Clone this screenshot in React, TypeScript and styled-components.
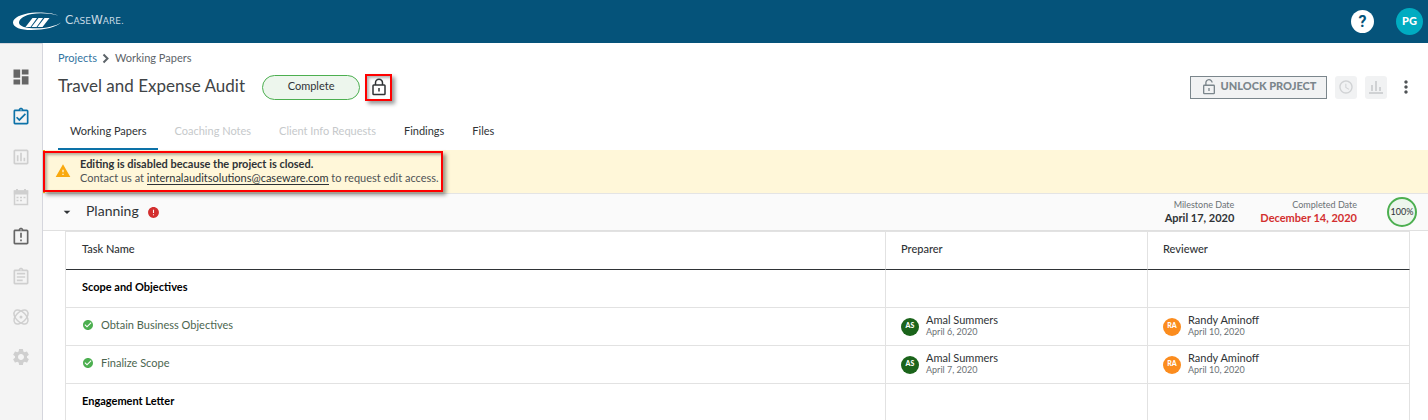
import React from 'react';
import styled, { createGlobalStyle } from 'styled-components';
import {
  MdDashboard,
  MdOutlineAssignmentTurnedIn,
  MdOutlineAssessment,
  MdOutlineAssignmentLate,
  MdOutlineAssignment,
  MdSettings,
  MdWarning,
  MdError,
  MdCheckCircle,
  MdMoreVert,
  MdAccessTime,
  MdArrowDropDown,
} from 'react-icons/md';

const GlobalStyle = createGlobalStyle`
  *, *::before, *::after { box-sizing: border-box; }
  body { margin: 0; background: #fff; color: #2f3336; font: 11px/16px Lato, "Open Sans", sans-serif; }
  button { font: inherit; margin: 0; padding: 0; border: 0; background: none; color: inherit; }
  a { color: inherit; text-decoration: none; }
  svg { display: block; flex: none; }
`;

const Page = styled.div`
  display: flex;
  flex-direction: column;
  min-height: 100vh;
  overflow: hidden;
`;

const TopBar = styled.header`
  display: flex;
  align-items: center;
  height: 43px;
  padding: 0 5px 0 12px;
  background: #05537a;
  color: #fff;
`;

const Brand = styled.a`
  display: flex;
  align-items: center;
  gap: 3px;
  margin-right: auto;
`;

const BrandName = styled.span`
  padding-bottom: 2px;
  font: 9px/12px "DejaVu Sans", sans-serif;
  color: #c9dbe5;
`;

const BrandCap = styled.span`
  font-size: 12px;
`;

const HelpButton = styled.button`
  display: grid;
  place-items: center;
  width: 23px;
  height: 23px;
  margin-right: 22px;
  border-radius: 50%;
  background: #fff;
  color: #05537a;
  font: 700 16px/20px Roboto, sans-serif;
`;

const Avatar = styled.span<{ $size: number; $color: string; $font: number }>`
  display: grid;
  place-items: center;
  flex: none;
  width: ${(p) => p.$size}px;
  height: ${(p) => p.$size}px;
  padding-bottom: 2px;
  border-radius: 50%;
  background: ${(p) => p.$color};
  color: #fff;
  font-weight: 900;
  font-size: ${(p) => p.$font}px;
  line-height: 1;
`;

const Body = styled.div`
  display: flex;
  flex: 1;
`;

const Sidebar = styled.nav`
  display: flex;
  flex-direction: column;
  align-items: center;
  gap: 20px;
  flex: none;
  width: 43px;
  padding-top: 23px;
  border-right: 1px solid #d5d6dd;
  border-top: 1px solid #d5d6dd;
  background: #f4f4f4;
`;

const SideItem = styled.button<{ $color: string }>`
  display: grid;
  place-items: center;
  width: 20px;
  height: 20px;
  color: ${(p) => p.$color};
`;

const Main = styled.main`
  flex: 1;
  min-width: 0;
`;

const Crumbs = styled.nav`
  display: flex;
  align-items: center;
  gap: 1px;
  padding: 7px 15px 0;
  color: #5d6469;
`;

const CrumbLink = styled.a`
  color: #3274a1;
`;

const TitleRow = styled.div`
  display: flex;
  align-items: center;
  height: 42px;
  padding: 0 11px 0 15px;
`;

const Title = styled.h1`
  margin: 0 17px 0 0;
  padding-bottom: 2px;
  font-size: 17px;
  line-height: 24px;
  font-weight: 400;
  color: #3f4447;
`;

const StatusPill = styled.span`
  display: grid;
  place-items: center;
  width: 98px;
  height: 25px;
  margin-right: 5px;
  padding-bottom: 2px;
  border: 1px solid #4caf50;
  border-radius: 13px;
  background: #edf6ed;
`;

const LockMark = styled.span`
  display: grid;
  place-items: center;
  width: 27px;
  height: 27px;
  border: 2px solid #f00;
  box-shadow: 3px 3px 4px rgba(0, 0, 0, 0.4), inset 2px 2px 3px rgba(0, 0, 0, 0.3);
`;

const Actions = styled.div`
  display: flex;
  align-items: center;
  gap: 8px;
  margin-left: auto;
`;

const UnlockButton = styled.button`
  display: flex;
  align-items: center;
  justify-content: center;
  gap: 4px;
  width: 137px;
  height: 23px;
  border: 1px solid #7b868c;
  background: #f1f2f3;
  color: #7b868c;
  font-weight: 900;
`;

const UnlockLabel = styled.span`
  padding-bottom: 2px;
`;

const IconButton = styled.button<{ $plain?: boolean }>`
  display: grid;
  place-items: center;
  width: 22px;
  height: 23px;
  border-radius: 3px;
  background: ${(p) => (p.$plain ? 'none' : '#f1f2f3')};
  color: ${(p) => (p.$plain ? '#4f5356' : '#d0d2d4')};
`;

const Tabs = styled.div`
  display: flex;
  gap: 5px;
  height: 42px;
  padding: 0 15px;
`;

const Tab = styled.button<{ $active?: boolean }>`
  padding: 6px 11px 0 12px;
  border-bottom: 2px solid ${(p) => (p.$active ? '#0d72a8' : 'transparent')};
  color: #2f3336;

  &:disabled { color: #c6c9cb; }
`;

const Banner = styled.div`
  display: flex;
  padding: 1px 0;
  border-bottom: 1px solid #e4e4e4;
  background: #fff7d9;
  box-shadow: inset 2px 0 #f9a90f;
`;

const BannerMessage = styled.div`
  display: flex;
  align-items: center;
  gap: 9px;
  padding: 4px 2px 5px 10px;
  border: 2px solid #f00;
  box-shadow: 3px 3px 4px rgba(0, 0, 0, 0.4), inset 2px 2px 3px rgba(0, 0, 0, 0.3);
  background: #fff7d9;
`;

const BannerText = styled.p`
  margin: 0;
  line-height: 14px;
  color: #4f5356;
`;

const BannerStrong = styled.strong`
  display: block;
  color: #2f3336;
`;

const MailLink = styled.a`
  border-bottom: 1px solid #2f3336;
  color: #2f3336;
`;

const SectionHeader = styled.div`
  display: flex;
  align-items: center;
  height: 37px;
  padding: 0 11px 0 16px;
  border-bottom: 1px solid #e0e0e0;
  background: #fafafa;
`;

const SectionTitle = styled.h2`
  margin: 0 8px 0 11px;
  padding-bottom: 2px;
  font-size: 14px;
  line-height: 18px;
  font-weight: 400;
`;

const SectionMeta = styled.div`
  display: flex;
  align-items: center;
  gap: 26px;
  margin-left: auto;
`;

const DateBlock = styled.dl<{ $late?: boolean }>`
  margin: 0;
  padding-bottom: 1px;
  text-align: right;
  color: ${(p) => (p.$late ? '#d32f2f' : '#2f3336')};
`;

const DateLabel = styled.dt`
  font-size: 9px;
  line-height: 12px;
  color: #6b7175;
`;

const DateValue = styled.dd`
  margin: 0;
  line-height: 14px;
  font-weight: 700;
`;

const Progress = styled.span`
  display: grid;
  place-items: center;
  width: 30px;
  height: 30px;
  margin-left: 4px;
  border: 2px solid #4caf50;
  border-radius: 50%;
  background: #edf6ed;
  font-size: 9px;
  line-height: 12px;
`;

const TableWrap = styled.div`
  padding: 0 18px 0 22px;
`;

const TaskTable = styled.table`
  width: 100%;
  border-collapse: separate;
  border-spacing: 0;
  border-left: 1px solid #e2e2e2;
  border-top: 1px solid #e2e2e2;
  table-layout: fixed;
`;

const PersonCol = styled.col`
  width: 262px;
`;

const HeadCell = styled.th`
  height: 38px;
  padding: 0 14px 3px 15px;
  border-right: 1px solid #e2e2e2;
  border-bottom: 1px solid #2f3336;
  text-align: left;
  font-weight: 500;

  &:first-child { padding-left: 16px; }
`;

const Cell = styled.td`
  height: 38px;
  padding: 0 14px 0 15px;
  border-right: 1px solid #e2e2e2;
  border-bottom: 1px solid #e2e2e2;

  &:first-child { padding: 0 14px 3px 16px; }
`;

const GroupName = styled.strong`
  color: #000;
`;

const TaskLink = styled.a`
  display: flex;
  align-items: center;
  gap: 7px;
  color: #4c6650;
`;

const Person = styled.div`
  display: flex;
  align-items: center;
  gap: 7px;
`;

const PersonText = styled.div`
  padding-bottom: 2px;
`;

const PersonName = styled.div`
  line-height: 12px;
`;

const PersonDate = styled.div`
  font-size: 9px;
  line-height: 11px;
  color: #6b7175;
`;

const Logo = () => (
  <svg width="50" height="20" viewBox="0 0 50 20" fill="#fff" aria-hidden="true">
    <path d="M46 3.500C40 .5 28 0 20 .8 9 2 1 6 1 10.500 1 15.500 9 18 19 18c14 0 26-3 30-7.500C44 14 34 16.300 24 16.300 14 16.300 7 14.500 7 10.500 7 6.500 13 3.300 20 1.900 28 .6 38 1.200 46 3.500Z" />
    <path d="M20.500 6H25L18.500 15H13.500ZM26.500 6H31L24.500 15H19.500ZM32.500 6H37.500L30.500 15H25.500Z" />
  </svg>
);

const LockIcon = ({ open, size }: { open?: boolean; size: number }) => (
  <svg width={size} height={size} viewBox="0 0 18 18" fill="none" stroke="currentColor" strokeWidth="1.500" aria-hidden="true">
    <rect x="3" y="7" width="12" height="9.500" rx="0.800" />
    <path d={open ? 'M5.500 7V4.500a3.500 3.500 0 0 1 7-.5' : 'M5.500 7V4.800a3.500 3.500 0 0 1 7 0V7'} />
    <path d="M9 10v3.500" />
  </svg>
);

const CrumbChevron = () => (
  <svg width="16" height="16" viewBox="0 0 16 16" fill="none" stroke="currentColor" strokeWidth="2" aria-hidden="true">
    <path d="M5.500 4.500 9.500 8.500 5.500 12.500" />
  </svg>
);

const CalendarIcon = () => (
  <svg width="20" height="20" viewBox="0 0 20 20" fill="none" stroke="currentColor" aria-hidden="true">
    <path d="M3.500 4h13v13.500h-13Z" strokeWidth="1.500" />
    <path d="M2.800 5.500h14.400" strokeWidth="4" />
    <path d="M6 2v3M14 2v3" strokeWidth="2" />
    <path d="M5.500 10.500h2M9 10.500h2M12.500 10.500h2M5.500 13.500h2M9 13.500h2" strokeWidth="1.500" />
  </svg>
);

const AtomIcon = () => (
  <svg width="20" height="20" viewBox="0 0 20 20" fill="none" stroke="currentColor" strokeWidth="1.500" aria-hidden="true">
    <ellipse cx="10" cy="10" rx="8.600" ry="5" transform="rotate(45 10 10)" />
    <ellipse cx="10" cy="10" rx="8.600" ry="5" transform="rotate(-45 10 10)" />
    <circle cx="10" cy="10" r="1.500" fill="currentColor" stroke="none" />
  </svg>
);

const ChartIcon = () => (
  <svg width="16" height="16" viewBox="0 0 16 16" fill="currentColor" aria-hidden="true">
    <path d="M1 13h14v2H1ZM3 6h2v6H3ZM7 2h2v10H7ZM11 8h2v4h-2Z" />
  </svg>
);

const GREY = '#cfcfcf';

const sideItems = [
  { label: 'Dashboard', color: '#666', icon: <MdDashboard size={20} /> },
  { label: 'Projects', color: '#0d72a8', icon: <MdOutlineAssignmentTurnedIn size={20} /> },
  { label: 'Reports', color: GREY, icon: <MdOutlineAssessment size={20} /> },
  { label: 'Calendar', color: GREY, icon: <CalendarIcon /> },
  { label: 'Issues', color: '#666', icon: <MdOutlineAssignmentLate size={20} /> },
  { label: 'Forms', color: GREY, icon: <MdOutlineAssignment size={20} /> },
  { label: 'Risks', color: GREY, icon: <AtomIcon /> },
  { label: 'Settings', color: GREY, icon: <MdSettings size={20} /> },
];

const tabs = [
  { label: 'Working Papers', active: true },
  { label: 'Coaching Notes', disabled: true },
  { label: 'Client Info Requests', disabled: true },
  { label: 'Findings' },
  { label: 'Files' },
];

type Row = { group: string } | { task: string; prepared: string; reviewed: string };

const rows: Row[] = [
  { group: 'Scope and Objectives' },
  { task: 'Obtain Business Objectives', prepared: 'April 6, 2020', reviewed: 'April 10, 2020' },
  { task: 'Finalize Scope', prepared: 'April 7, 2020', reviewed: 'April 10, 2020' },
  { group: 'Engagement Letter' },
];

const PersonCell = (p: { initials: string; color: string; name: string; date: string }) => (
  <Cell>
    <Person>
      <Avatar $size={18} $color={p.color} $font={7}>{p.initials}</Avatar>
      <PersonText>
        <PersonName>{p.name}</PersonName>
        <PersonDate>{p.date}</PersonDate>
      </PersonText>
    </Person>
  </Cell>
);

export default function App() {
  return (
    <Page>
      <GlobalStyle />
      <TopBar>
        <Brand href="#">
          <Logo />
          <BrandName>
            <BrandCap>C</BrandCap>ASE<BrandCap>W</BrandCap>ARE.
          </BrandName>
        </Brand>
        <HelpButton aria-label="Help">?</HelpButton>
        <Avatar $size={27} $color="#00acc1" $font={11}>PG</Avatar>
      </TopBar>
      <Body>
        <Sidebar aria-label="Main">
          {sideItems.map((s) => (
            <SideItem key={s.label} $color={s.color} aria-label={s.label}>{s.icon}</SideItem>
          ))}
        </Sidebar>
        <Main>
          <Crumbs aria-label="Breadcrumb">
            <CrumbLink href="#">Projects</CrumbLink>
            <CrumbChevron />
            <span>Working Papers</span>
          </Crumbs>
          <TitleRow>
            <Title>Travel and Expense Audit</Title>
            <StatusPill>Complete</StatusPill>
            <LockMark><LockIcon size={18} /></LockMark>
            <Actions>
              <UnlockButton><LockIcon open size={16} /><UnlockLabel>UNLOCK PROJECT</UnlockLabel></UnlockButton>
              <IconButton aria-label="History"><MdAccessTime size={16} /></IconButton>
              <IconButton aria-label="Statistics"><ChartIcon /></IconButton>
              <IconButton $plain aria-label="More"><MdMoreVert size={20} /></IconButton>
            </Actions>
          </TitleRow>
          <Tabs>
            {tabs.map((t) => (
              <Tab key={t.label} $active={t.active} disabled={t.disabled}>{t.label}</Tab>
            ))}
          </Tabs>
          <Banner>
            <BannerMessage>
              <MdWarning size={16} color="#f9a90f" />
              <BannerText>
                <BannerStrong>Editing is disabled because the project is closed.</BannerStrong>
                Contact us at <MailLink href="mailto:internalauditsolutions@caseware.com">internalauditsolutions@caseware.com</MailLink> to request edit access.
              </BannerText>
            </BannerMessage>
          </Banner>
          <SectionHeader>
            <MdArrowDropDown size={16} />
            <SectionTitle>Planning</SectionTitle>
            <MdError size={13} color="#d32f2f" />
            <SectionMeta>
              <DateBlock>
                <DateLabel>Milestone Date</DateLabel>
                <DateValue>April 17, 2020</DateValue>
              </DateBlock>
              <DateBlock $late>
                <DateLabel>Completed Date</DateLabel>
                <DateValue>December 14, 2020</DateValue>
              </DateBlock>
              <Progress>100%</Progress>
            </SectionMeta>
          </SectionHeader>
          <TableWrap>
            <TaskTable>
              <colgroup><col /><PersonCol /><PersonCol /></colgroup>
              <thead>
                <tr>
                  <HeadCell>Task Name</HeadCell>
                  <HeadCell>Preparer</HeadCell>
                  <HeadCell>Reviewer</HeadCell>
                </tr>
              </thead>
              <tbody>
                {rows.map((r) =>
                  'group' in r ? (
                    <tr key={r.group}>
                      <Cell><GroupName>{r.group}</GroupName></Cell>
                      <Cell />
                      <Cell />
                    </tr>
                  ) : (
                    <tr key={r.task}>
                      <Cell>
                        <TaskLink href="#"><MdCheckCircle size={12} color="#4caf50" />{r.task}</TaskLink>
                      </Cell>
                      <PersonCell initials="AS" color="#1b641b" name="Amal Summers" date={r.prepared} />
                      <PersonCell initials="RA" color="#fb8c1e" name="Randy Aminoff" date={r.reviewed} />
                    </tr>
                  ),
                )}
              </tbody>
            </TaskTable>
          </TableWrap>
        </Main>
      </Body>
    </Page>
  );
}
